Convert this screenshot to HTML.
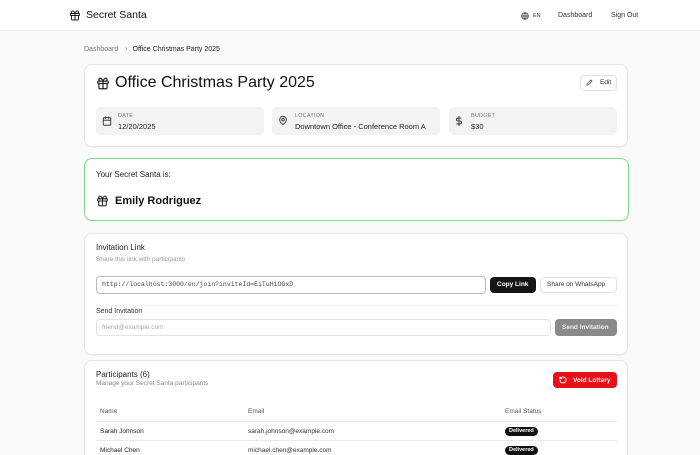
<!DOCTYPE html>
<html style="width:700px;height:455px;overflow:hidden"><head><meta charset="utf-8"><style>
*{box-sizing:border-box;margin:0;padding:0}
body{width:700px;height:455px;overflow:hidden;background:#fafafa;font-family:"Liberation Sans",sans-serif;color:#111;position:relative}
.a{position:absolute}
.card{position:absolute;background:#fff;border:1px solid #e6e6e6;border-radius:8px;box-shadow:0 1px 2px rgba(0,0,0,.05)}
.t{position:absolute;white-space:nowrap}
.box{position:absolute;top:107px;height:28px;background:#f3f3f3;border-radius:5px}
.lbl{font-size:5.5px;color:#777;letter-spacing:.2px}
.val{font-size:7.5px;color:#222}
svg{position:absolute;fill:none;stroke:#222;stroke-linecap:round;stroke-linejoin:round}
.pill{position:absolute;background:#111;color:#fff;font-size:5.5px;font-weight:bold;border-radius:6px;padding:1px 4px;height:9px;line-height:7px}
</style></head><body>
<div class="a" style="left:0;top:0;width:700px;height:31px;background:#fff;border-bottom:1px solid #ececec"></div>
<svg style="left:69px;top:9px" width="12" height="13" viewBox="0 0 24 24" stroke-width="2"><rect x="3" y="8" width="18" height="4" rx="1"/><path d="M12 8v13M19 12v7a2 2 0 0 1-2 2H7a2 2 0 0 1-2-2v-7M7.5 8a2.5 2.5 0 0 1 0-5C10 3 12 8 12 8s2-5 4.5-5a2.5 2.5 0 0 1 0 5"/></svg>
<div class="t" style="left:86px;top:9px;font-size:10.5px">Secret Santa</div>
<svg style="left:521px;top:12px" width="8" height="8" viewBox="0 0 24 24" stroke-width="2"><circle cx="12" cy="12" r="10"/><path d="M2 12h20M12 2a15 15 0 0 1 0 20a15 15 0 0 1 0-20"/></svg>
<div class="t" style="left:533px;top:13px;font-size:5.5px;color:#333">EN</div>
<div class="t" style="left:558px;top:12px;font-size:7px;color:#333">Dashboard</div>
<div class="t" style="left:611px;top:12px;font-size:7px;color:#333">Sign Out</div>
<div class="t" style="left:84px;top:46px;font-size:7px;color:#777">Dashboard <span style="margin:0 5px">›</span><span style="color:#222">Office Christmas Party 2025</span></div>

<div class="card" style="left:84px;top:64px;width:544px;height:83px"></div>
<svg style="left:96px;top:76px" width="14" height="15" viewBox="0 0 24 24" stroke-width="2"><rect x="3" y="8" width="18" height="4" rx="1"/><path d="M12 8v13M19 12v7a2 2 0 0 1-2 2H7a2 2 0 0 1-2-2v-7M7.5 8a2.5 2.5 0 0 1 0-5C10 3 12 8 12 8s2-5 4.5-5a2.5 2.5 0 0 1 0 5"/></svg>
<div class="t" style="left:115px;top:74px;font-size:16px">Office Christmas Party 2025</div>
<div class="a" style="left:580px;top:75px;width:37px;height:16px;border:1px solid #e3e3e3;border-radius:4px;background:#fff"></div>
<svg style="left:586px;top:79px" width="7" height="7" viewBox="0 0 24 24" stroke-width="2"><path d="M17 3l4 4L7 21H3v-4z"/></svg>
<div class="t" style="left:600px;top:79px;font-size:6.5px;color:#333">Edit</div>
<div class="box" style="left:96px;width:168px"></div>
<div class="box" style="left:272px;width:168px"></div>
<div class="box" style="left:449px;width:168px"></div>
<svg style="left:102px;top:116px" width="10" height="10" viewBox="0 0 24 24" stroke-width="2"><rect x="3" y="4" width="18" height="18" rx="2"/><path d="M16 2v4M8 2v4M3 10h18"/></svg>
<div class="t lbl" style="left:118px;top:113px">DATE</div><div class="t val" style="left:118px;top:122px">12/20/2025</div>
<svg style="left:278px;top:115px" width="10" height="11" viewBox="0 0 24 24" stroke-width="2"><path d="M20 10c0 6-8 12-8 12s-8-6-8-12a8 8 0 0 1 16 0z"/><circle cx="12" cy="10" r="3"/></svg>
<div class="t lbl" style="left:295px;top:113px">LOCATION</div><div class="t val" style="left:295px;top:122px">Downtown Office - Conference Room A</div>
<svg style="left:454px;top:115px" width="10" height="12" viewBox="0 0 24 24" stroke-width="2"><path d="M12 1v22M17 5H9.5a3.5 3.5 0 0 0 0 7h5a3.5 3.5 0 0 1 0 7H6"/></svg>
<div class="t lbl" style="left:471px;top:113px">BUDGET</div><div class="t val" style="left:471px;top:122px">$30</div>

<div class="card" style="left:84px;top:158px;width:545px;height:63px;border:1.5px solid #7fd98e"></div>
<div class="t" style="left:96px;top:170px;font-size:8px;color:#222">Your Secret Santa is:</div>
<svg style="left:96px;top:194px" width="13" height="14" viewBox="0 0 24 24" stroke-width="2"><rect x="3" y="8" width="18" height="4" rx="1"/><path d="M12 8v13M19 12v7a2 2 0 0 1-2 2H7a2 2 0 0 1-2-2v-7M7.5 8a2.5 2.5 0 0 1 0-5C10 3 12 8 12 8s2-5 4.5-5a2.5 2.5 0 0 1 0 5"/></svg>
<div class="t" style="left:115px;top:195px;font-size:11px;font-weight:bold">Emily Rodriguez</div>

<div class="card" style="left:84px;top:233px;width:544px;height:122px"></div>
<div class="t" style="left:96px;top:243px;font-size:8px;color:#222">Invitation Link</div>
<div class="t" style="left:96px;top:256px;font-size:6.5px;color:#999">Share this link with participants</div>
<div class="a" style="left:96px;top:276px;width:390px;height:18px;border:1.5px solid #bbb;border-radius:4px;background:#fff"></div>
<div class="t" style="left:102px;top:281px;font-size:6.5px;font-family:'Liberation Mono',monospace;color:#444">http://localhost:3000/en/join?inviteId=EiTuHiOGxD</div>
<div class="a" style="left:490px;top:277px;width:46px;height:16px;background:#151515;border-radius:4px"></div>
<div class="t" style="left:497px;top:281px;font-size:6.5px;font-weight:bold;color:#fff">Copy Link</div>
<div class="a" style="left:540px;top:277px;width:77px;height:16px;border:1px solid #e3e3e3;border-radius:4px;background:#fff"></div>
<div class="t" style="left:547px;top:281px;font-size:6.5px;color:#333">Share on WhatsApp</div>
<div class="a" style="left:96px;top:305px;width:521px;height:1px;background:#eee"></div>
<div class="t" style="left:96px;top:308px;font-size:7px;color:#333">Send Invitation</div>
<div class="a" style="left:96px;top:319px;width:455px;height:17px;border:1px solid #e3e3e3;border-radius:4px;background:#fff"></div>
<div class="t" style="left:102px;top:324px;font-size:6.5px;color:#aaa">friend@example.com</div>
<div class="a" style="left:555px;top:319px;width:62px;height:17px;background:#8a8a8a;border-radius:4px"></div>
<div class="t" style="left:562px;top:324px;font-size:6.5px;font-weight:bold;color:#eee">Send Invitation</div>

<div class="card" style="left:84px;top:360px;width:544px;height:110px"></div>
<div class="t" style="left:96px;top:370px;font-size:8px;color:#222">Participants (6)</div>
<div class="t" style="left:96px;top:380px;font-size:6.5px;color:#888">Manage your Secret Santa participants</div>
<div class="a" style="left:553px;top:372px;width:64px;height:16px;background:#e8101a;border-radius:4px"></div>
<svg style="left:559px;top:376px;stroke:#fff" width="8" height="8" viewBox="0 0 24 24" stroke-width="3"><path d="M3 12a9 9 0 1 0 3-6.7L3 8M3 3v5h5"/></svg>
<div class="t" style="left:573px;top:377px;font-size:6.5px;font-weight:bold;color:#fff">Void Lottery</div>
<div class="t" style="left:100px;top:408px;font-size:6.5px;color:#555">Name</div>
<div class="t" style="left:248px;top:408px;font-size:6.5px;color:#555">Email</div>
<div class="t" style="left:505px;top:408px;font-size:6.5px;color:#555">Email Status</div>
<div class="a" style="left:96px;top:421px;width:521px;height:1px;background:#eaeaea"></div>
<div class="t" style="left:100px;top:428px;font-size:6.5px;color:#222">Sarah Johnson</div>
<div class="t" style="left:248px;top:428px;font-size:6.5px;color:#333">sarah.johnson@example.com</div>
<div class="pill" style="left:505px;top:427px">Delivered</div>
<div class="a" style="left:96px;top:440px;width:521px;height:1px;background:#eaeaea"></div>
<div class="t" style="left:100px;top:447px;font-size:6.5px;color:#222">Michael Chen</div>
<div class="t" style="left:248px;top:447px;font-size:6.5px;color:#333">michael.chen@example.com</div>
<div class="pill" style="left:505px;top:446px">Delivered</div>
</body></html>
